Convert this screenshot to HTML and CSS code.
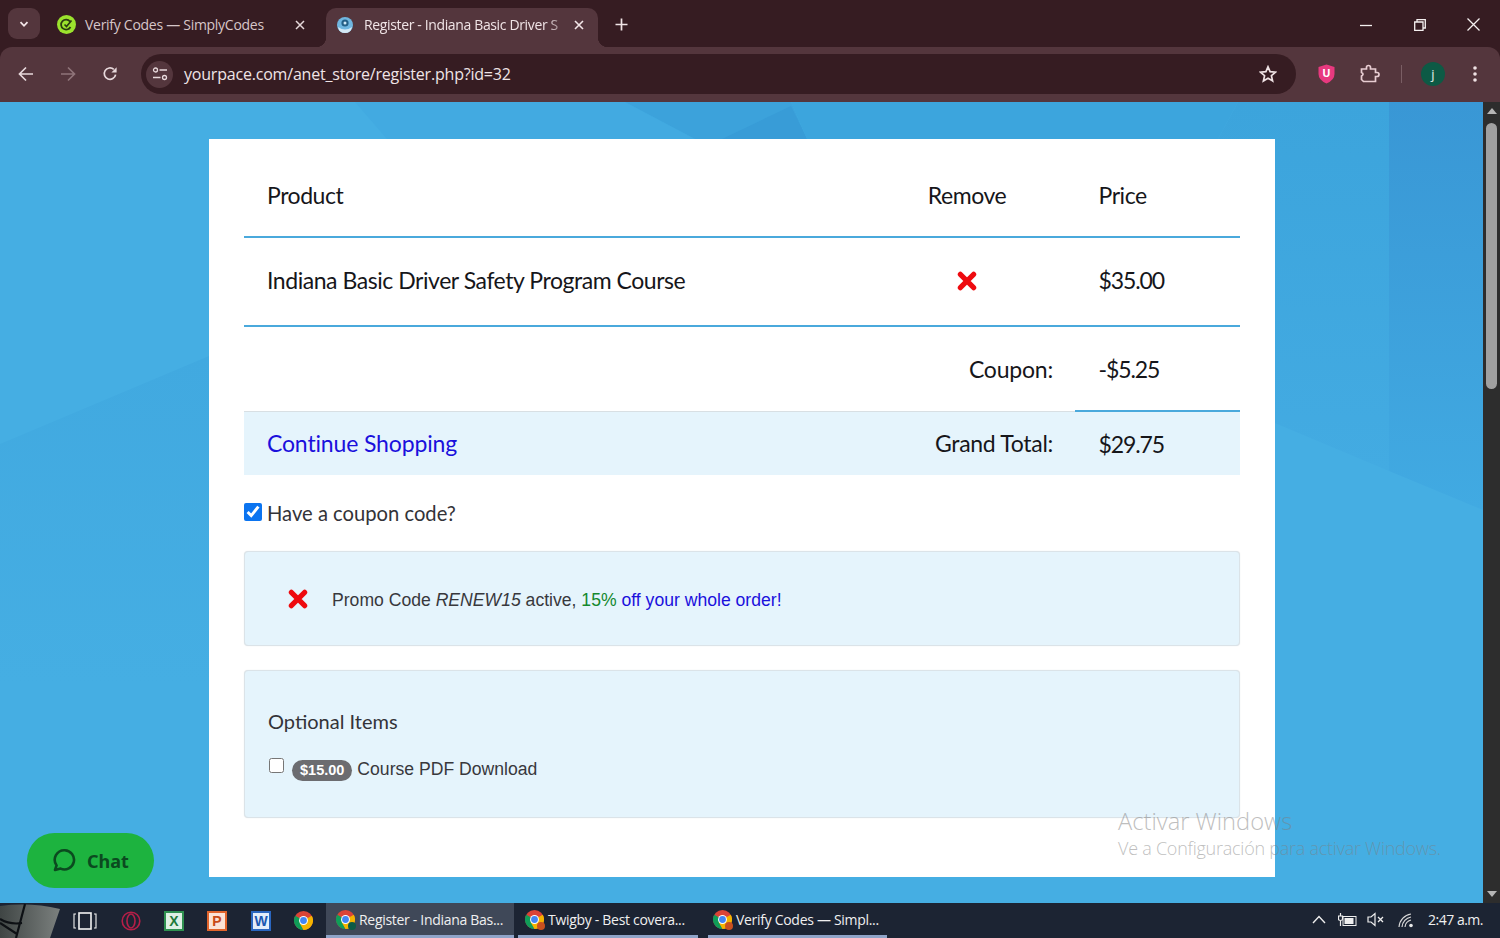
FILE: index.html
```html
<!DOCTYPE html>
<html lang="en">
<head>
<meta charset="utf-8">
<title>Register - Indiana Basic Driver Safety Program Course</title>
<link rel="stylesheet" href="styles.css">
</head>
<body>
<svg class="defs" width="0" height="0" aria-hidden="true">
  <symbol id="chrome" viewBox="0 0 24 24">
    <circle cx="12" cy="12" r="12" fill="#db4437"/>
    <path d="M12 12 L1.6 18 A12 12 0 0 1 1.6 6 Z M1.6 6 L7 14 L12 24 A12 12 0 0 1 1.6 18 Z" fill="#0f9d58"/>
    <path d="M12 12 L22.4 6 A12 12 0 0 1 12 24 L7 15 Z" fill="#f4b400"/>
    <circle cx="12" cy="12" r="5.6" fill="#fff"/>
    <circle cx="12" cy="12" r="4.3" fill="#4285f4"/>
  </symbol>
  <symbol id="redx" viewBox="0 0 18 18">
    <path d="M3 3 L15 15 M15 3 L3 15" stroke="#ee0a0f" stroke-width="4.6" stroke-linecap="round" fill="none"/>
  </symbol>
  <linearGradient id="fade-mid" x1="0" y1="0" x2="0" y2="1">
    <stop offset="0" stop-color="#3ca4dc"/><stop offset="1" stop-color="#43abe2"/>
  </linearGradient>
  <linearGradient id="fade-right" x1="0" y1="0" x2="0" y2="1">
    <stop offset="0" stop-color="#3997d5"/><stop offset="1" stop-color="#41aae2"/>
  </linearGradient>
  <linearGradient id="fade-left" x1="0" y1="0" x2="0" y2="1">
    <stop offset="0" stop-color="#41a9e0"/><stop offset="0.6" stop-color="#45aee3"/>
  </linearGradient>
  <linearGradient id="logo-grey" x1="0" y1="0" x2="1" y2="0">
    <stop offset="0" stop-color="#3f4544"/><stop offset="1" stop-color="#7b807e"/>
  </linearGradient>
</svg>

<div class="screen">
  <header class="browser">
    <div class="tabstrip">
      <button class="tabsearch" aria-label="Search tabs">
        <svg width="12" height="12" viewBox="0 0 12 12"><path d="M2.5 4.2 L6 7.8 L9.5 4.2" fill="none" stroke="#f3e6e8" stroke-width="1.8"/></svg>
      </button>
      <div class="tab">
        <svg class="favicon" width="19" height="19" viewBox="0 0 19 19"><circle cx="9.5" cy="9.5" r="9.5" fill="#9be22d"/><path d="M13 6.5 A5 5 0 1 0 13.5 12 M7.5 9.5 L9.5 11.5 L14.5 5.5" fill="none" stroke="#2b3a12" stroke-width="1.7"/></svg>
        <span class="tab-title">Verify Codes — SimplyCodes</span>
        <svg class="tab-close" width="10" height="10" viewBox="0 0 10 10"><path d="M1 1 L9 9 M9 1 L1 9" stroke="#e6d8da" stroke-width="1.5"/></svg>
      </div>
      <div class="tab tab-active">
        <svg class="favicon" width="16" height="16" viewBox="0 0 16 16"><circle cx="8" cy="8" r="8" fill="#6fb6e0"/><path d="M1 10 Q8 15 15 10 Q14 16 8 16 Q2 16 1 10Z" fill="#d4e9f5"/><circle cx="8" cy="6" r="3.6" fill="#235f86"/><circle cx="8" cy="6" r="1.5" fill="#cfe8f6"/></svg>
        <span class="tab-title tab-title-fade">Register - Indiana Basic Driver S</span>
        <svg class="tab-close" width="10" height="10" viewBox="0 0 10 10"><path d="M1 1 L9 9 M9 1 L1 9" stroke="#f3e6e8" stroke-width="1.6"/></svg>
      </div>
      <svg class="newtab" width="13" height="13" viewBox="0 0 13 13"><path d="M6.5 0.5 V12.5 M0.5 6.5 H12.5" stroke="#f0e4e6" stroke-width="1.7"/></svg>
      <div class="winctrl">
        <svg width="12" height="12" viewBox="0 0 12 12"><path d="M0 6.5 H12" stroke="#f5f0f0" stroke-width="1.3"/></svg>
        <svg width="12" height="12" viewBox="0 0 12 12"><path d="M3 2.5 V0.7 H11.3 V9 H9.3 M0.7 3 H9 V11.3 H0.7 Z" fill="none" stroke="#f5f0f0" stroke-width="1.3"/></svg>
        <svg width="13" height="13" viewBox="0 0 13 13"><path d="M0.5 0.5 L12.5 12.5 M12.5 0.5 L0.5 12.5" stroke="#f5f0f0" stroke-width="1.3"/></svg>
      </div>
    </div>
    <div class="toolbar">
      <svg class="navicon nav-back" width="16" height="16" viewBox="0 0 16 16"><path d="M15 8 H2 M8 1.5 L1.5 8 L8 14.5" fill="none" stroke="#e8d9dc" stroke-width="1.7"/></svg>
      <svg class="navicon nav-fwd" width="16" height="16" viewBox="0 0 16 16"><path d="M1 8 H14 M8 1.5 L14.5 8 L8 14.5" fill="none" stroke="#8f7479" stroke-width="1.7"/></svg>
      <svg class="navicon nav-reload" width="16" height="16" viewBox="0 0 16 16"><path d="M13.6 8.6 A5.7 5.7 0 1 1 11.8 3.4" fill="none" stroke="#e8d9dc" stroke-width="1.7"/><path d="M9.4 6.4 H14.6 V1.2 Z" fill="#e8d9dc"/></svg>
      <div class="omnibox">
        <span class="site-info">
          <svg width="16" height="14" viewBox="0 0 16 14"><circle cx="3.5" cy="3" r="2" fill="none" stroke="#e8d9dc" stroke-width="1.3"/><path d="M7.5 3 H15 M1 10.5 H8.5" stroke="#e8d9dc" stroke-width="1.4"/><circle cx="12.5" cy="10.5" r="2" fill="none" stroke="#e8d9dc" stroke-width="1.3"/></svg>
        </span>
        <span class="url">yourpace.com/anet_store/register.php?id=32</span>
        <svg class="star" width="18" height="18" viewBox="0 0 18 18"><path d="M9 1.8 L11.1 6.7 L16.4 7.2 L12.4 10.7 L13.6 15.9 L9 13.2 L4.4 15.9 L5.6 10.7 L1.6 7.2 L6.9 6.7 Z" fill="none" stroke="#efe2e4" stroke-width="1.7"/></svg>
      </div>
      <svg class="ublock" width="17" height="20" viewBox="0 0 17 20"><path d="M8.5 0.5 L16.5 3 V10 Q16.5 16 8.5 19.5 Q0.5 16 0.5 10 V3 Z" fill="#e8397f"/><text x="8.5" y="13" text-anchor="middle" class="ublock-text">U</text></svg>
      <svg class="puzzle" width="20" height="20" viewBox="0 0 20 20"><path d="M1.5 5 H6.5 V3.5 A2 2 0 0 1 10.5 3.5 V5 H15.5 V8.5 H17 A2 2 0 0 1 17 12.5 H15.5 V17.5 H3.5 L1.5 15.5 V12 Q4.5 10 1.5 8.5 Z" fill="none" stroke="#e8cdd2" stroke-width="1.7"/></svg>
      <span class="tooldiv"></span>
      <span class="avatar">j</span>
      <svg class="kebab" width="4" height="16" viewBox="0 0 4 16"><circle cx="2" cy="2" r="1.8" fill="#efe2e4"/><circle cx="2" cy="8" r="1.8" fill="#efe2e4"/><circle cx="2" cy="14" r="1.8" fill="#efe2e4"/></svg>
    </div>
  </header>

  <div class="viewport">
    <main class="page">
      <svg class="wallpaper" width="1483" height="801" viewBox="0 0 1483 801" aria-hidden="true">
        <polygon points="355,0 625,0 695,37 387,37" fill="#42aae1"/>
        <polygon points="625,0 791,0 807,37 695,37" fill="#3ca2db"/>
        <polygon points="791,4 807,37 722,37" fill="#389cd7"/>
        <polygon points="791,0 1238,0 1218,37 807,37" fill="#3ca5dd"/>
        <polygon points="1238,0 1389,0 1389,369 1172,278 1218,37" fill="url(#fade-mid)"/>
        <polygon points="1389,0 1483,0 1483,408 1389,369" fill="url(#fade-right)"/>
        <polygon points="0,342 209,254 209,801 0,801" fill="url(#fade-left)"/>
      </svg>
      <section class="card">
        <table class="cart">
          <thead>
            <tr class="row-head">
              <th class="col-product">Product</th>
              <th class="col-remove">Remove</th>
              <th class="col-price">Price</th>
            </tr>
          </thead>
          <tbody>
            <tr class="row-item">
              <td>Indiana Basic Driver Safety Program Course</td>
              <td class="col-remove"><svg class="x-icon" width="20" height="20"><use href="#redx"/></svg></td>
              <td class="money">$35.00</td>
            </tr>
            <tr class="row-coupon">
              <td class="label" colspan="2">Coupon:</td>
              <td class="money underlined">-$5.25</td>
            </tr>
            <tr class="row-total">
              <td><a href="#" class="shop-link">Continue Shopping</a></td>
              <td class="label label-total">Grand Total:</td>
              <td class="money">$29.75</td>
            </tr>
          </tbody>
        </table>

        <label class="coupon-toggle">
          <input type="checkbox" class="check-big" checked>
          <span>Have a coupon code?</span>
        </label>

        <div class="panel promo">
          <svg class="x-icon" width="20" height="20"><use href="#redx"/></svg>
          <p class="promo-text">Promo Code <em>RENEW15</em> active, <span class="green">15%</span> <span class="blue">off your whole order!</span></p>
        </div>

        <div class="panel optional">
          <h2 class="optional-title">Optional Items</h2>
          <label class="optional-item">
            <input type="checkbox" class="check-small">
            <span class="badge">$15.00</span>
            <span class="optional-name">Course PDF Download</span>
          </label>
        </div>
      </section>

      <button class="chat">
        <svg width="25" height="25" viewBox="0 0 25 25"><path d="M12.8 2.2 A9.6 9.6 0 1 1 8.6 20.6 L3 22 L4.6 17.4 A9.6 9.6 0 0 1 12.8 2.2 Z" fill="none" stroke="#0b4a1f" stroke-width="2.6" stroke-linejoin="round"/></svg>
        <span>Chat</span>
      </button>

      <div class="activate">
        <div class="activate-title">Activar Windows</div>
        <div class="activate-sub">Ve a Configuración para activar Windows.</div>
      </div>
    </main>
    <aside class="scrollbar">
      <span class="arrow-up"></span>
      <span class="thumb"></span>
      <span class="arrow-down"></span>
    </aside>
  </div>

  <footer class="taskbar">
    <div class="start">
      <svg width="60" height="35" viewBox="0 0 60 35"><path d="M0 3 Q30 -1 60 6 L50 35 H0 Z" fill="url(#logo-grey)"/><path d="M25 1 L16 35 M0 16 Q10 22 22 20 M0 20 L17 31" fill="none" stroke="#0d1014" stroke-width="2.2"/></svg>
    </div>
    <div class="pinned">
      <svg width="24" height="18" viewBox="0 0 24 18"><rect x="6" y="1" width="12" height="16" fill="none" stroke="#f2f2f2" stroke-width="1.6"/><path d="M3 2 H1 V16 H3 M21 2 H23 V16 H21" fill="none" stroke="#f2f2f2" stroke-width="1.1"/></svg>
      <svg class="pin-opera" width="20" height="20" viewBox="0 0 20 20"><circle cx="10" cy="10" r="8.8" fill="none" stroke="#b51f48" stroke-width="1.6"/><ellipse cx="10" cy="10" rx="4" ry="7" fill="none" stroke="#b51f48" stroke-width="1.6"/></svg>
      <span class="office office-x">X</span>
      <span class="office office-p">P</span>
      <span class="office office-w">W</span>
      <svg class="pin-chrome" width="19" height="19"><use href="#chrome"/></svg>
    </div>
    <div class="task task-active">
      <span class="task-icon"><svg width="19" height="19"><use href="#chrome"/></svg><i class="task-badge task-badge-green"></i></span>
      <span class="task-label">Register - Indiana Bas...</span>
    </div>
    <div class="task task-two">
      <span class="task-icon"><svg width="19" height="19"><use href="#chrome"/></svg><i class="task-badge"></i></span>
      <span class="task-label">Twigby - Best covera...</span>
    </div>
    <div class="task task-three">
      <span class="task-icon"><svg width="19" height="19"><use href="#chrome"/></svg><i class="task-badge"></i></span>
      <span class="task-label">Verify Codes — Simpl...</span>
    </div>
    <div class="tray">
      <svg class="tray-caret" width="14" height="9" viewBox="0 0 14 9"><path d="M1 8 L7 1.5 L13 8" fill="none" stroke="#eee" stroke-width="1.4"/></svg>
      <svg class="tray-power" width="19" height="14" viewBox="0 0 19 14"><rect x="5" y="3.5" width="13" height="9" fill="none" stroke="#eee" stroke-width="1"/><rect x="6.5" y="5" width="9" height="6" fill="#eee"/><path d="M2.5 0 V3 M0.5 3 H4.5 V6 Q4.5 7.5 2.5 7.5 Q0.5 7.5 0.5 6 Z M2.5 7.5 V13" fill="none" stroke="#eee" stroke-width="1.2"/></svg>
      <svg width="18" height="15" viewBox="0 0 18 15"><path d="M1 5 H4 L8 1.5 V13.5 L4 10 H1 Z" fill="none" stroke="#eee" stroke-width="1.2"/><path d="M11 5 L16 10 M16 5 L11 10" stroke="#eee" stroke-width="1.3"/></svg>
      <svg class="tray-wifi" width="16" height="16" viewBox="0 0 16 16"><path d="M1 15 A14 14 0 0 1 13 2 M4 15 A11 11 0 0 1 13 5 M7 15 A8 8 0 0 1 13 8" fill="none" stroke="#d8d8d8" stroke-width="1.2"/><circle cx="13" cy="13.5" r="1.8" fill="#e8e8e8"/></svg>
      <span class="clock">2:47 a.m.</span>
    </div>
  </footer>
</div>
</body>
</html>
```
FILE: styles.css
```css
* { box-sizing: border-box; }
html, body { margin: 0; padding: 0; height: 100%; overflow: hidden; }
body { font-family: "Open Sans", "Liberation Sans", sans-serif; background: #45aee3; }
.defs { position: absolute; }
.screen { width: 1500px; height: 938px; display: flex; flex-direction: column; }

/* browser chrome */
.browser { height: 102px; flex: none; background: #361c22; }
.tabstrip { height: 47px; display: flex; align-items: flex-start; position: relative; padding: 8px 0 0 8px; }
.tabsearch { width: 32px; height: 31px; margin: 0; border: 0; border-radius: 9px; background: #54363d; display: flex; align-items: center; justify-content: center; padding: 0; }
.tab { height: 39px; display: flex; align-items: center; color: #d6c6c9; font-size: 14px; letter-spacing: -0.28px; position: relative; }
.tab:nth-child(2) { width: 286px; padding: 0 21px 0 17px; }
.tab .favicon { flex: none; margin-top: -6px; }
.tab:nth-child(2) .tab-title { margin-left: 9px; flex: 1; margin-top: -6px; }
.tab-close { flex: none; margin-top: -6px; }
.tab-active { width: 272px; background: #54363d; border-radius: 10px 10px 0 0; padding: 0 14px 0 11px; color: #f0e4e6; }
.tab-active::before, .tab-active::after { content: ""; position: absolute; bottom: 0; width: 10px; height: 10px; }
.tab-active::before { left: -10px; background: radial-gradient(circle at 0 0, transparent 10px, #54363d 10.5px); }
.tab-active::after { right: -10px; background: radial-gradient(circle at 100% 0, transparent 10px, #54363d 10.5px); }
.tab-title-fade { margin-left: 11px; flex: 1; white-space: nowrap; margin-top: -6px; letter-spacing: -0.36px; -webkit-mask-image: linear-gradient(90deg, #000 86%, transparent 100%); mask-image: linear-gradient(90deg, #000 86%, transparent 100%); }
.newtab { margin: 10px 0 0 17px; flex: none; }
.winctrl { margin: 10px 0 0 auto; padding-right: 20px; display: flex; justify-content: flex-end; align-items: center; gap: 41.5px; }
.toolbar { height: 55px; background: #54363d; border-radius: 12px 12px 0 0; display: flex; align-items: center; padding: 0 0 1px 18px; }
.nav-back { margin-right: 26px; }
.nav-fwd { margin-right: 26px; }
.nav-reload { margin-right: 23px; }
.omnibox { width: 1155px; height: 40px; border-radius: 20px; background: #361c22; display: flex; align-items: center; padding: 0 19px 0 5px; }
.site-info { width: 27px; height: 27px; border-radius: 50%; background: #54363d; display: flex; align-items: center; justify-content: center; flex: none; }
.url { margin-left: 11px; font-size: 16px; letter-spacing: -0.2px; color: #efe4e6; flex: 1; }
.star { flex: none; }
.ublock { margin-left: 22px; flex: none; }
.ublock-text { font: 700 11px "Open Sans", sans-serif; fill: #fff; }
.puzzle { margin-left: 25px; flex: none; }
.tooldiv { width: 1px; height: 18px; background: #7a5e64; margin-left: 21px; flex: none; }
.avatar { width: 24px; height: 24px; margin-left: 19px; border-radius: 50%; background: #0d5a45; color: #e6f0ec; font-size: 13px; display: flex; align-items: center; justify-content: center; flex: none; }
.kebab { margin-left: 28px; flex: none; }

/* page */
.viewport { height: 801px; flex: none; display: flex; }
.page { width: 1483px; flex: none; position: relative; overflow: hidden; background: #45aee3; padding: 37px 0 0 209px; }
.wallpaper { position: absolute; left: 0; top: 0; }
.card { width: 1066px; height: 738px; background: #fff; position: relative; padding: 15px 35px 0; color: #16161a; font-family: "Lato", "Open Sans", sans-serif; }

.cart { width: 996px; border-collapse: collapse; table-layout: fixed; font-size: 23px; letter-spacing: -0.45px; }
.cart th { font-weight: 400; text-align: left; padding: 0 0 1px 23px; }
.cart td { padding: 0 0 0 23px; }
.cart .col-price { padding-left: 23.5px; }
.cart td.money { padding-left: 23.5px; letter-spacing: -1.1px; }
.row-head { height: 83px; border-bottom: 2px solid #4aa9dc; }
.col-product { width: 615px; }
.cart .col-remove { width: 216px; text-align: center; padding-left: 0; }
.col-price { width: 165px; }
.row-item { height: 89px; border-bottom: 2px solid #4aa9dc; }
.cart .row-item td { padding-bottom: 4px; }
.cart .row-item td.col-remove { padding-bottom: 2px; }
.row-item .x-icon { display: block; margin: 0 auto; }
.row-coupon { height: 85px; }
.cart td.label { text-align: right; padding: 0 22px 0 0; letter-spacing: -0.2px; }
.cart td.label-total { letter-spacing: -0.3px; }
.row-total { height: 64px; background: #e5f4fc; border-top: 1px solid #d8dfe3; }
.row-coupon .underlined { border-bottom: 2px solid #4aa9dc; }
.shop-link { color: #1a10dc; text-decoration: none; letter-spacing: -0.15px; }

.coupon-toggle { display: flex; align-items: center; margin-top: 25px; font-size: 20.2px; height: 24px; color: #333338; }
.coupon-toggle span { padding-top: 2px; }
.check-big { width: 18px; height: 18px; margin: 0 5px 0 0; accent-color: #0b74f0; }

.panel { background: #e5f4fc; border: 1px solid #dbe3e8; border-radius: 4px; box-shadow: 0 0 1px #d8dde0; }
.promo { height: 95px; margin-top: 27px; display: flex; align-items: center; padding-left: 43px; }
.promo .x-icon { flex: none; }
.promo-text { margin: 3px 0 0 24px; font: 17.6px "Liberation Sans", Arial, sans-serif; color: #38383c; }
.green { color: #14882e; }
.blue { color: #1a10dc; }
.optional { height: 148px; margin-top: 24px; padding: 35px 23px 0; }
.optional-title { margin: 0; font-size: 20px; font-weight: 400; line-height: 30px; color: #333338; }
.optional-item { display: flex; align-items: center; margin-top: 21px; font: 17.6px "Liberation Sans", Arial, sans-serif; color: #38383c; }
.check-small { width: 15px; height: 15px; margin: 0 8px 8px 1px; }
.badge { background: #6c6c70; color: #fff; border-radius: 11px; font-size: 14.5px; font-weight: 700; padding: 2px 8px; line-height: 17px; margin-top: 3px; }
.optional-name { margin-left: 5px; }

.chat { position: absolute; left: 27px; top: 731px; width: 127px; height: 55px; border: 0; border-radius: 28px; background: #1db33f; color: #0b4a1f; font: 700 18px "Noto Sans", sans-serif; display: flex; align-items: center; padding: 0 0 0 25px; gap: 10px; }
.activate { position: absolute; left: 1118px; top: 705px; color: rgba(125,125,125,.5); font-family: "Open Sans", sans-serif; white-space: nowrap; }
.activate-title { font-size: 23.7px; line-height: 29px; font-weight: 300; }
.activate-sub { font-size: 18px; line-height: 24px; letter-spacing: -0.25px; font-weight: 300; }

/* scrollbar */
.scrollbar { width: 17px; flex: none; background: #2d2d2d; position: relative; display: flex; flex-direction: column; align-items: center; padding-top: 6px; }
.arrow-up { width: 0; height: 0; border: 5.5px solid transparent; border-top: 0; border-bottom: 6px solid #b5b5b5; }
.thumb { width: 11px; height: 266px; margin-top: 9px; border-radius: 6px; background: #a0a0a0; }
.arrow-down { width: 0; height: 0; border: 5.5px solid transparent; border-bottom: 0; border-top: 6px solid #b5b5b5; margin-top: auto; margin-bottom: 6px; }

/* taskbar */
.taskbar { height: 35px; flex: none; background: #1c2433; display: flex; align-items: stretch; color: #f0f0f0; font-family: "Open Sans", sans-serif; font-size: 14px; letter-spacing: -0.3px; }
.start { width: 60px; flex: none; }
.pinned { width: 266px; flex: none; display: flex; align-items: center; padding-left: 13px; gap: 21px; }
.pin-opera { margin-left: 3px; }
.pin-chrome { margin-left: 2px; }
.office { width: 20px; height: 20px; flex: none; display: flex; align-items: center; justify-content: center; font: 700 14px "Liberation Sans", sans-serif; letter-spacing: 0; border: 2px solid; background: #f2f2f2; }
.office-x { color: #1f7a3a; border-color: #2f9150; background: #dff0e4; margin-left: 2px; }
.office-p { color: #c84a16; border-color: #e0642c; background: #fbe3d6; margin-left: 2px; }
.office-w { color: #1a56b0; border-color: #2a66c0; background: #e2ecfa; margin-left: 3px; }
.task { display: flex; align-items: center; position: relative; flex: none; padding-bottom: 2px; }
.task::after { content: ""; position: absolute; left: 0; right: 0; bottom: 0; height: 3px; background: #8fa4c8; }
.task-active { width: 188px; background: #3f4858; padding-left: 10px; }
.task-two { width: 180px; margin-left: 4px; padding-left: 7px; }
.task-three { width: 179px; margin-left: 10px; padding-left: 5px; }
.task-icon { position: relative; width: 19px; height: 19px; margin-right: 4px; flex: none; display: block; }
.task-icon svg { display: block; }
.task-badge { position: absolute; right: -1px; bottom: -1px; width: 8px; height: 8px; border-radius: 50%; background: #c9501f; }
.task-badge-green { background: #0d5a45; }
.tray { margin-left: auto; display: flex; align-items: center; padding-right: 17px; gap: 11px; padding-bottom: 2px; }
.tray-caret { margin-right: 1px; }
.tray-power { margin-right: -1px; }
.tray-wifi { margin-left: 2px; }
.clock { margin-left: 3px; font-size: 14px; letter-spacing: -0.5px; }
```
